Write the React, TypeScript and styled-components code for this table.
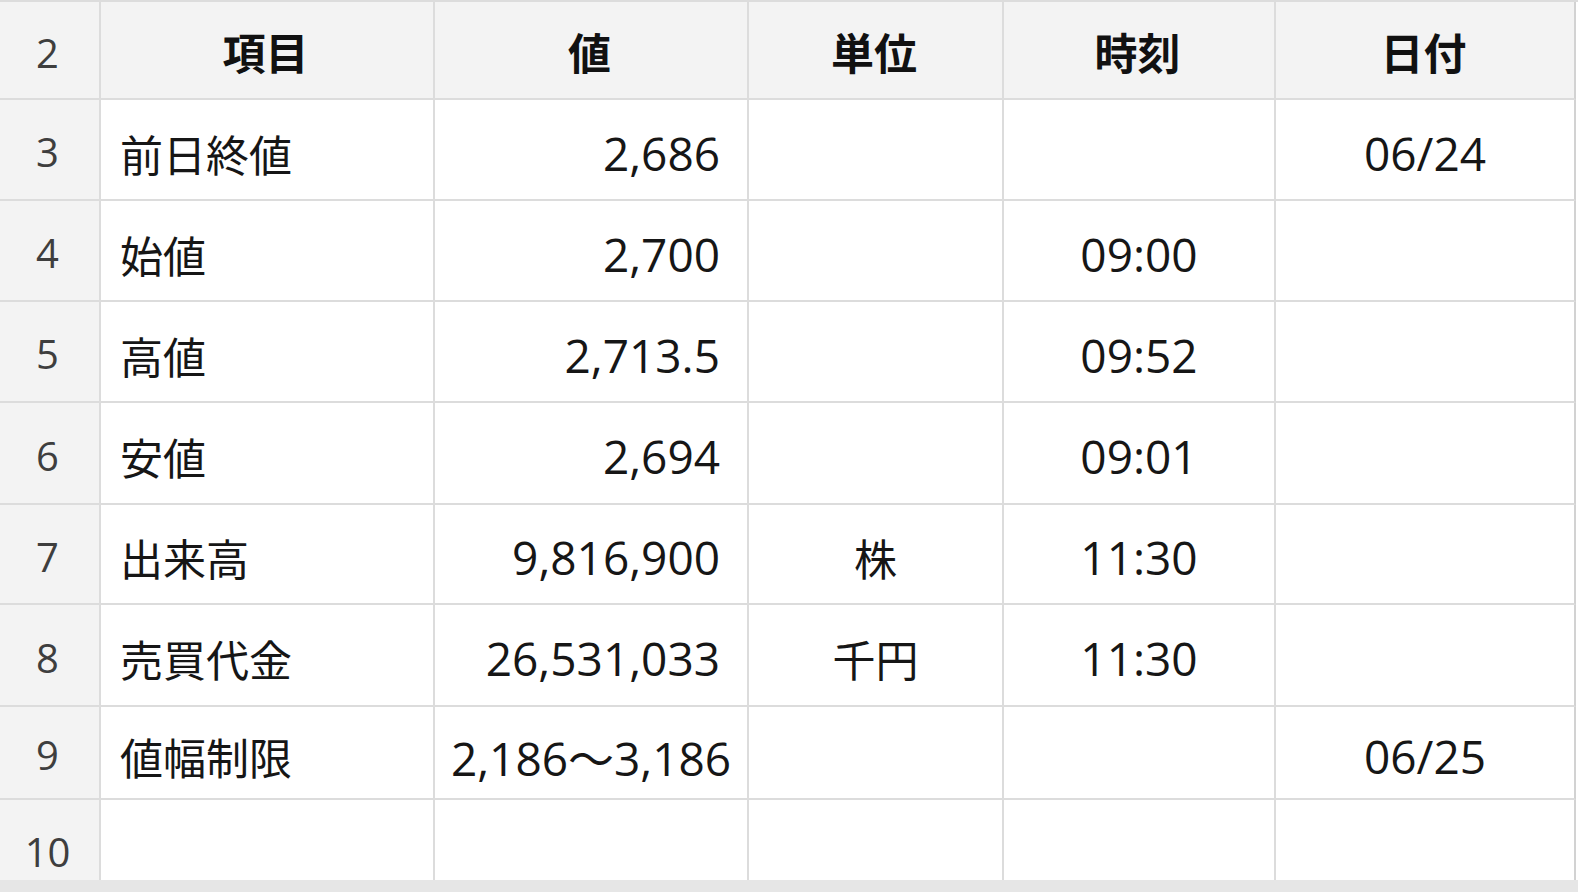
import styled, { createGlobalStyle } from "styled-components"

const GlobalStyle = createGlobalStyle`
    html, body {
        margin: 0;
        padding: 0;
        background-color: #e6e6e6;
    }
    body {
        font-family: "Open Sans", "Noto Sans CJK JP", sans-serif;
        color: #161616;
    }
`

const line = "#dcdcdc";

type Align = "left" | "right" | "center";

const columns: { key: "item" | "value" | "unit" | "time" | "date"; label: string; width: number; align: Align; kanji?: boolean }[] = [
    { key: "item", label: "項目", width: 334, align: "left", kanji: true },
    { key: "value", label: "値", width: 314, align: "right" },
    { key: "unit", label: "単位", width: 255, align: "center", kanji: true },
    { key: "time", label: "時刻", width: 272, align: "center" },
    { key: "date", label: "日付", width: 300, align: "center" },
];

const rows = [
    { no: 3, height: 101, item: "前日終値", value: "2,686", unit: "", time: "", date: "06/24" },
    { no: 4, height: 101, item: "始値", value: "2,700", unit: "", time: "09:00", date: "" },
    { no: 5, height: 101, item: "高値", value: "2,713.5", unit: "", time: "09:52", date: "" },
    { no: 6, height: 102, item: "安値", value: "2,694", unit: "", time: "09:01", date: "" },
    { no: 7, height: 100, item: "出来高", value: "9,816,900", unit: "株", time: "11:30", date: "" },
    { no: 8, height: 102, item: "売買代金", value: "26,531,033", unit: "千円", time: "11:30", date: "" },
    { no: 9, height: 93, item: "値幅制限", value: "2,186〜3,186", unit: "", time: "", date: "06/25", textValue: true },
    { no: 10, height: 100, item: "", value: "", unit: "", time: "", date: "" },
];

const Sheet = styled.div`
    height: 880px;
    overflow: hidden;
    background-color: #fff;
    border-top: 2px solid ${line};
    box-sizing: border-box;
    box-shadow: 0 2px 4px rgba(0, 0, 0, 0.12);
`

const Grid = styled.div`
    display: grid;
    grid-template-columns: 101px ${columns.map(c => c.width + "px").join(" ")};
    width: 1578px;
`

const Row = styled.div<{ $height: number }>`
    display: contents;
    > * {
        height: ${p => p.$height}px;
    }
`

const RowNumber = styled.div`
    display: flex;
    align-items: center;
    justify-content: center;
    box-sizing: border-box;
    background-color: #f3f3f3;
    border-right: 2px solid ${line};
    border-bottom: 2px solid ${line};
    color: #3e3e3e;
    font-size: 40px;
    padding: 4px 4px 0 0;
`

const HeaderCell = styled.div`
    display: flex;
    align-items: center;
    justify-content: center;
    box-sizing: border-box;
    background-color: #f3f3f3;
    border-right: 2px solid ${line};
    border-bottom: 2px solid ${line};
    font-family: "Noto Sans CJK JP", sans-serif;
    font-weight: 700;
    font-size: 43px;
    color: #111;
    padding: 2px 3px 0 0;
    &:last-child {
        border-right: 2px solid #d2d2d2;
    }
`

const Cell = styled.div<{ $align: Align; $kanji?: boolean }>`
    display: flex;
    align-items: center;
    justify-content: ${p => p.$align === "left" ? "flex-start" : p.$align === "right" ? "flex-end" : "center"};
    box-sizing: border-box;
    padding: 6px ${p => p.$align === "right" ? "27px" : "0"} 0 ${p => p.$align === "left" ? "19px" : "0"};
    background-color: #fff;
    border-right: 2px solid ${line};
    border-bottom: 2px solid ${line};
    font-family: ${p => p.$kanji ? `"Noto Sans CJK JP", sans-serif` : `"Open Sans", "Noto Sans CJK JP", sans-serif`};
    font-size: ${p => p.$kanji ? "43px" : "46px"};
    white-space: nowrap;
    &:last-child {
        border-right: 2px solid #d2d2d2;
    }
`

export default function App() {
    return <>
        <GlobalStyle />
        <Sheet>
            <Grid>
                <Row $height={98}>
                    <RowNumber>2</RowNumber>
                    {columns.map(c => <HeaderCell key={c.key}>{c.label}</HeaderCell>)}
                </Row>
                {
                    rows.map(r => {
                        return <Row key={r.no} $height={r.height}>
                            <RowNumber>{r.no}</RowNumber>
                            {columns.map(c => {
                                const align = c.key === "value" && r.textValue ? "center" : c.align;
                                return <Cell key={c.key} $align={align} $kanji={c.kanji}>{r[c.key]}</Cell>
                            })}
                        </Row>
                    })
                }
            </Grid>
        </Sheet>
    </>
}
